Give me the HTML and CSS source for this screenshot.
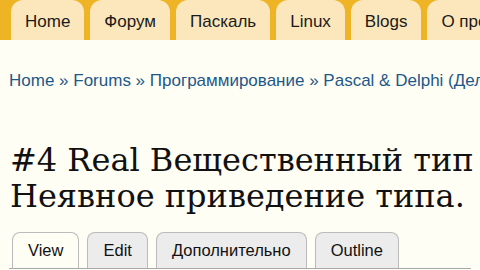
FILE: index.html
```html
<!DOCTYPE html>
<html lang="ru">
<head>
    <meta charset="UTF-8">
    <meta name="viewport" content="width=device-width, initial-scale=1.0">
    <title>#4 Real Вещественный тип</title>
    <link rel="stylesheet" href="styles.css">
</head>
<body>
    <div class="header">
        <ul class="primary-links">
            <li><a href="#">Home</a></li>
            <li><a href="#">Форум</a></li>
            <li><a href="#">Паскаль</a></li>
            <li><a href="#">Linux</a></li>
            <li><a href="#">Blogs</a></li>
            <li><a href="#">О проекте</a></li>
        </ul>
    </div>

    <div class="content">
        <div class="breadcrumb">
            <a href="#">Home</a> » <a href="#">Forums</a> » <a href="#">Программирование</a> » <a href="#">Pascal &amp; Delphi (Делфи)</a>
        </div>

        <h1 class="title">#4 Real Вещественный тип Неявное приведение типа.</h1>

        <ul class="tabs">
            <li class="active"><a href="#">View</a></li>
            <li><a href="#">Edit</a></li>
            <li><a href="#">Дополнительно</a></li>
            <li><a href="#">Outline</a></li>
        </ul>
    </div>
</body>
</html>
```

FILE: styles.css
```css
body {
    margin: 0;
    background-color: #fffef4;
    font-family: "Liberation Sans", Arial, sans-serif;
    color: #111;
    overflow: hidden;
}
.header {
    background-color: #efb326;
    height: 40px;
    padding-left: 11px;
    overflow: hidden;
}
.primary-links {
    display: flex;
    gap: 6px;
    margin: 0;
    padding: 0;
    list-style: none;
    white-space: nowrap;
}
.primary-links li {
    flex: none;
    background-color: #fce7bc;
    border-radius: 12px 12px 0 0;
}
.primary-links a {
    display: block;
    padding: 3px 14px 0;
    line-height: 37px;
    font-size: 17px;
    color: #1a1a1a;
    text-decoration: none;
}
.content {
    padding: 0 9px;
    overflow: hidden;
}
.breadcrumb {
    margin-top: 31px;
    font-size: 17px;
    line-height: 20px;
    color: #1d5888;
    white-space: nowrap;
}
.breadcrumb a {
    color: #1d5888;
    text-decoration: none;
}
.title {
    margin: 51px 0 0 1px;
    font-family: "DejaVu Serif", Georgia, serif;
    font-weight: normal;
    font-size: 32px;
    line-height: 36px;
    width: 470px;
    color: #111;
}
.tabs {
    display: flex;
    gap: 8px;
    margin: 18px 0 0;
    padding: 0 0 0 3px;
    list-style: none;
    border-bottom: 1px solid #aaa;
}
.tabs li {
    border: 1px solid #bbb;
    border-bottom: none;
    border-radius: 8px 8px 0 0;
    background-color: #ececec;
}
.tabs li.active {
    background-color: #fffef4;
}
.tabs a {
    display: block;
    padding: 0 15px;
    line-height: 35px;
    font-size: 16.5px;
    color: #111;
    text-decoration: none;
}
```
